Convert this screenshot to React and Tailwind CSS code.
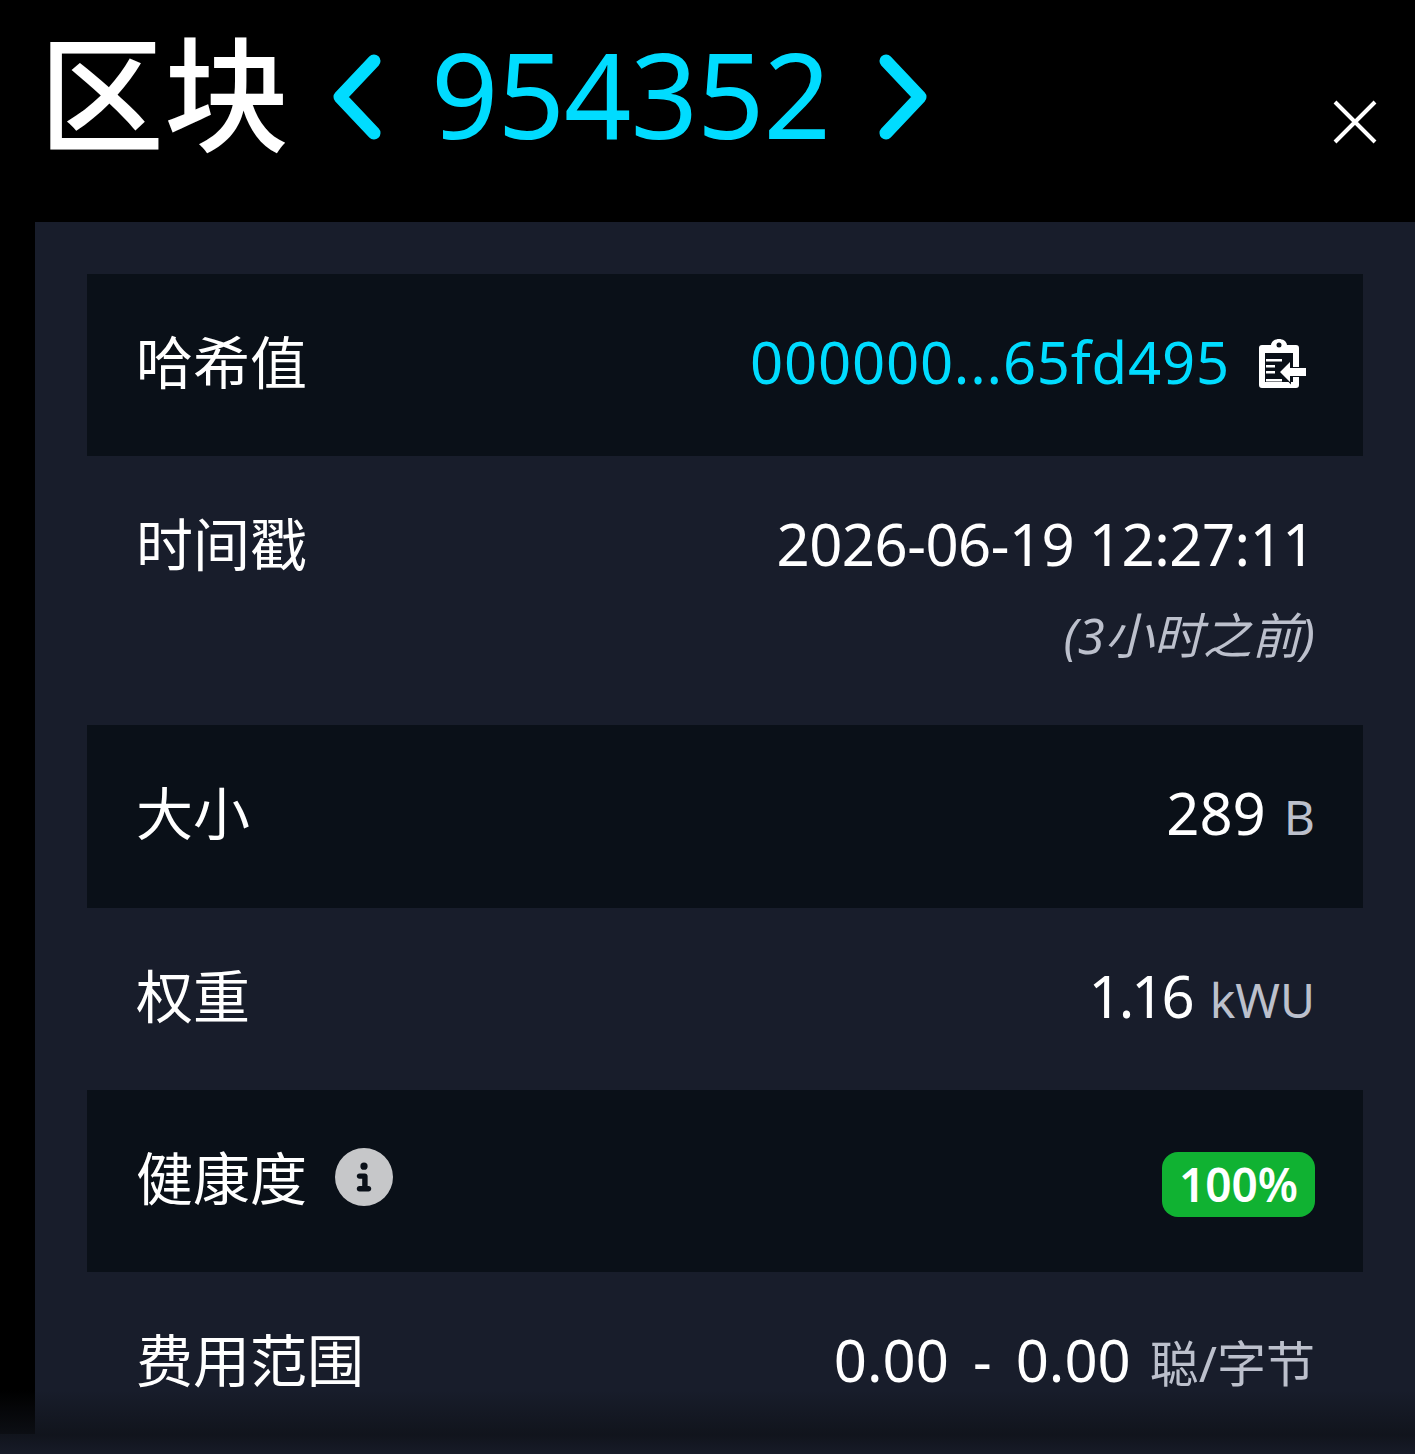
import React from 'react';
import { FaCircleInfo } from 'react-icons/fa6';

const cjk = { fontFamily: '"Noto Sans", "Noto Sans CJK SC", sans-serif' };

const ChevronLeft = () => (
    <svg width="52" height="86" viewBox="0 0 52 86" fill="none" className="shrink-0 mt-[6px]">
        <path d="M42 7 L8 43 L42 79" stroke="#00dcff" strokeWidth="13" strokeLinecap="round" strokeLinejoin="round" />
    </svg>
);

const ChevronRight = () => (
    <svg width="52" height="86" viewBox="0 0 52 86" fill="none" className="shrink-0 mt-[6px]">
        <path d="M10 7 L44 43 L10 79" stroke="#00dcff" strokeWidth="13" strokeLinecap="round" strokeLinejoin="round" />
    </svg>
);

const CloseIcon = () => (
    <svg width="44" height="44" viewBox="0 0 44 44" fill="none">
        <path d="M2 2 L42 42 M42 2 L2 42" stroke="#ffffff" strokeWidth="4" />
    </svg>
);

const PasteIcon = () => (
    <svg width="48" height="50" viewBox="0 0 48 50" fill="none" className="shrink-0 mt-[4px]">
        <path
            fillRule="evenodd"
            fill="#ffffff"
            d="M4 6 H13 C14 -2 28 -2 29 6 H38 Q41 6 41 9 V46 Q41 49 38 49 H4 Q1 49 1 46 V9 Q1 6 4 6 Z M7 14 V43 H35 V14 Z M21 3.5 A2.5 2.5 0 1 0 21 8.5 A2.5 2.5 0 1 0 21 3.5 Z"
        />
        <path d="M8 20 H24 V22.5 H8 Z M8 26 H17 V28.5 H8 Z M8 32 H17 V34.5 H8 Z M8 40 H24 V42.5 H8 Z" fill="#ffffff" />
        <path d="M48 29 H32 V23 L22 33 L32 43 V37 H48 Z" fill="#ffffff" stroke="#0a1018" strokeWidth="2" paintOrder="stroke" />
    </svg>
);

const Row = ({ dark, className, label, children }) => (
    <div className={`flex justify-between pl-[49px] pr-[48px] pt-[50px] ${dark ? 'bg-[#0a1018]' : ''} ${className}`}>
        <div className="text-[57px] leading-[76px] text-white flex items-start gap-[28px] whitespace-nowrap">{label}</div>
        <div className="flex flex-col items-end text-white">{children}</div>
    </div>
);

const App = () => {
    return (
        <div className="relative w-[1415px] h-[1454px] overflow-hidden bg-[#181d2b]" style={cjk}>
            <div className="h-[1434px] bg-black overflow-hidden">
                {/* Header */}
                <div className="h-[222px] flex items-start justify-between pl-[39px] pr-[38px]">
                    <div className="flex items-center pt-[24px]">
                        <h1 className="text-[125px] leading-[140px] text-white font-medium whitespace-nowrap">区块</h1>
                        <div className="ml-[43px] flex items-center">
                            <ChevronLeft />
                            <span className="ml-[47px] mr-[46px] text-[118px] leading-[140px] text-[#00dcff] tracking-[-1px]">954352</span>
                            <ChevronRight />
                        </div>
                    </div>
                    <div className="pt-[100px]">
                        <CloseIcon />
                    </div>
                </div>

                {/* Details */}
                <div className="ml-[35px] bg-[#181d2b] px-[52px] pt-[52px] h-[1300px]">
                    <Row dark className="h-[182px]" label="哈希值">
                        <div className="flex items-center gap-[28px] mr-[9px]">
                            <span className="text-[58px] leading-[76px] tracking-[0.8px] text-[#00dcff]">000000...65fd495</span>
                            <PasteIcon />
                        </div>
                    </Row>
                    <Row className="h-[269px]" label="时间戳">
                        <span className="text-[58px] leading-[76px] tracking-[-0.5px]">2026-06-19 12:27:11</span>
                        <span className="mt-[21px] text-[49px] leading-[64px] italic text-[#bcc0cc]">(3小时之前)</span>
                    </Row>
                    <Row dark className="h-[183px]" label="大小">
                        <div className="flex items-baseline gap-[18px]">
                            <span className="text-[58px] leading-[76px]">289</span>
                            <span className="text-[48px] leading-[76px] text-[#bcc0cc]">B</span>
                        </div>
                    </Row>
                    <Row className="h-[182px]" label="权重">
                        <div className="flex items-baseline gap-[18px]">
                            <span className="text-[58px] leading-[76px] tracking-[-3px]">1.16</span>
                            <span className="text-[48px] leading-[76px] text-[#bcc0cc]">kWU</span>
                        </div>
                    </Row>
                    <Row
                        dark
                        className="h-[182px]"
                        label={
                            <>
                                <span>健康度</span>
                                <FaCircleInfo className="mt-[8px] text-[58px] text-[#c6c7c9]" />
                            </>
                        }
                    >
                        <span className="mt-[12px] h-[65px] w-[153px] rounded-[16px] bg-[#10b232] flex items-center justify-center text-[46px] font-semibold">100%</span>
                    </Row>
                    <Row className="h-[182px]" label="费用范围">
                        <div className="flex items-baseline gap-[19px]">
                            <span className="text-[58px] leading-[76px] [word-spacing:9px]">0.00 - 0.00</span>
                            <span className="text-[49px] leading-[76px] text-[#bcc0cc]">聪/字节</span>
                        </div>
                    </Row>
                </div>
            </div>

            {/* Fade at the bottom edge */}
            <div className="absolute left-0 right-0 bottom-0 h-[64px] bg-gradient-to-b from-transparent via-[#0f1219]/80 via-70% to-[#171b28] pointer-events-none" />
        </div>
    );
};

export default App;
